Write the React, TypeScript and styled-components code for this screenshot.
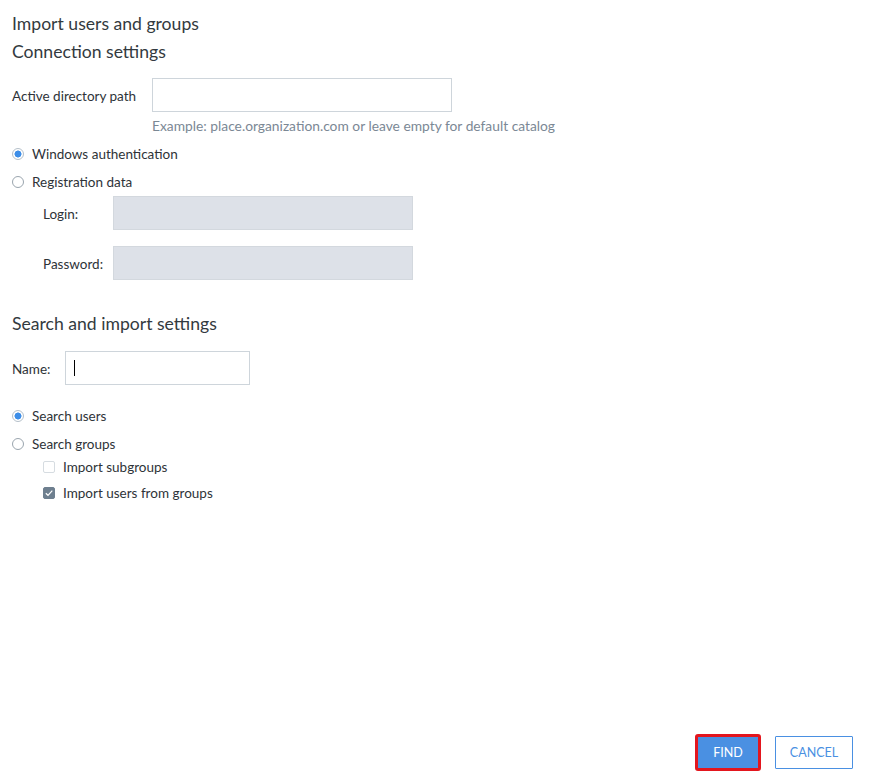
import styled, { createGlobalStyle } from 'styled-components';

const GlobalStyle = createGlobalStyle`
  html, body {
    margin: 0;
    padding: 0;
    height: 100%;
    background: #ffffff;
  }
  body {
    font-family: Lato, 'Noto Sans', sans-serif;
    color: #333a40;
  }
  #root {
    height: 100%;
  }
`;

const App = () => {
  return (
    <Page>
      <GlobalStyle />
      <Content>
        <Title>Import users and groups</Title>
        <SectionTitle>Connection settings</SectionTitle>

        <PathRow>
          <Label>Active directory path</Label>
          <TextInput width={300} />
        </PathRow>
        <Hint>Example: place.organization.com or leave empty for default catalog</Hint>

        <RadioGroup>
          <RadioRow>
            <Radio checked />
            <OptionText>Windows authentication</OptionText>
          </RadioRow>
          <RadioRow>
            <Radio />
            <OptionText>Registration data</OptionText>
          </RadioRow>
        </RadioGroup>

        <CredGrid>
          <Label>Login:</Label>
          <TextInput width={300} disabled />
          <Label>Password:</Label>
          <TextInput width={300} disabled />
        </CredGrid>

        <SearchTitle>Search and import settings</SearchTitle>

        <NameRow>
          <Label>Name:</Label>
          <NameBox>
            <Caret />
          </NameBox>
        </NameRow>

        <SearchRadios>
          <RadioRow>
            <Radio checked />
            <OptionText>Search users</OptionText>
          </RadioRow>
          <RadioRow>
            <Radio />
            <OptionText>Search groups</OptionText>
          </RadioRow>
        </SearchRadios>

        <CheckList>
          <CheckRow>
            <Checkbox />
            <OptionText>Import subgroups</OptionText>
          </CheckRow>
          <CheckRow>
            <Checkbox checked>
              <svg width="10" height="10" viewBox="0 0 10 10">
                <path d="M1.8 5.2 L4 7.3 L8.3 2.6" fill="none" stroke="#ffffff" strokeWidth="1.2" />
              </svg>
            </Checkbox>
            <OptionText>Import users from groups</OptionText>
          </CheckRow>
        </CheckList>
      </Content>

      <Footer>
        <PrimaryButton>FIND</PrimaryButton>
        <SecondaryButton>CANCEL</SecondaryButton>
      </Footer>
    </Page>
  );
};

const Page = styled.div`
  box-sizing: border-box;
  height: 100%;
  display: flex;
  flex-direction: column;
  padding: 12px 21px 11px 12px;
`;

const Content = styled.div`
  flex: 1;
  display: flex;
  flex-direction: column;
  align-items: flex-start;
`;

const Title = styled.div`
  font-size: 17.6px;
  line-height: 22px;
  margin-top: 1px;
`;

const SectionTitle = styled.div`
  font-size: 17.6px;
  line-height: 22px;
  margin-top: 6px;
`;

const Label = styled.div`
  font-size: 13.5px;
  color: #2e3338;
  padding-top: 2px;
`;

const PathRow = styled.div`
  display: flex;
  align-items: center;
  gap: 16px;
  margin-top: 15px;
`;

const TextInput = styled.div<{ width: number; disabled?: boolean }>`
  box-sizing: border-box;
  width: ${props => props.width}px;
  height: 34px;
  border: 1px solid ${props => (props.disabled ? '#d3d8de' : '#ced5db')};
  background: ${props => (props.disabled ? '#dde1e8' : '#ffffff')};
`;

const Hint = styled.div`
  font-size: 13.8px;
  color: #7b8895;
  margin: 5px 0 0 140px;
  line-height: 18px;
`;

const RadioGroup = styled.div`
  display: flex;
  flex-direction: column;
  gap: 8px;
  margin-top: 9px;
`;

const RadioRow = styled.div`
  display: flex;
  align-items: center;
  gap: 8px;
  height: 20px;
`;

const Radio = styled.span<{ checked?: boolean }>`
  box-sizing: border-box;
  width: 12px;
  height: 12px;
  border-radius: 50%;
  border: 1px solid #9aa5ae;
  background: ${props =>
    props.checked ? 'radial-gradient(circle, #3d8ee8 0 3.2px, #ffffff 3.8px)' : '#ffffff'};
  ${props => (props.checked ? 'border-color: #b5c0ca;' : '')}
`;

const OptionText = styled.span`
  font-size: 13.5px;
  color: #2e3338;
`;

const CredGrid = styled.div`
  display: grid;
  grid-template-columns: 70px 300px;
  row-gap: 16px;
  align-items: center;
  margin: 4px 0 0 31px;
`;

const SearchTitle = styled.div`
  font-size: 17.6px;
  line-height: 22px;
  margin-top: 33px;
`;

const NameRow = styled.div`
  display: flex;
  align-items: center;
  gap: 15px;
  margin-top: 16px;
`;

const NameBox = styled.div`
  box-sizing: border-box;
  width: 185px;
  height: 34px;
  border: 1px solid #ced5db;
  padding: 8px 0 0 8px;
`;

const Caret = styled.div`
  width: 1px;
  height: 16px;
  background: #000000;
`;

const SearchRadios = styled(RadioGroup)`
  margin-top: 21px;
`;

const CheckList = styled.div`
  display: flex;
  flex-direction: column;
  gap: 6px;
  margin: 3px 0 0 31px;
`;

const CheckRow = styled.div`
  display: flex;
  align-items: center;
  gap: 8px;
  height: 20px;
`;

const Checkbox = styled.span<{ checked?: boolean }>`
  box-sizing: border-box;
  width: 12px;
  height: 12px;
  border-radius: 2px;
  display: flex;
  align-items: center;
  justify-content: center;
  border: 1px solid ${props => (props.checked ? '#6e7f8f' : '#d6dce1')};
  background: ${props => (props.checked ? '#6e7f8f' : '#ffffff')};
`;

const Footer = styled.div`
  display: flex;
  justify-content: flex-end;
  gap: 16px;
`;

const BaseButton = styled.button`
  box-sizing: border-box;
  height: 33px;
  font-family: Lato, 'Noto Sans', sans-serif;
  font-size: 12.5px;
  border-radius: 1px;
  padding: 0;
  cursor: pointer;
`;

const PrimaryButton = styled(BaseButton)`
  width: 62px;
  background: #4a90e2;
  color: #ffffff;
  border: 1px solid #4a90e2;
  outline: 3px solid #e3161e;
  outline-offset: -1px;
`;

const SecondaryButton = styled(BaseButton)`
  width: 78px;
  background: #ffffff;
  color: #4a90e2;
  border: 1px solid #4a90e2;
`;

export default App;
